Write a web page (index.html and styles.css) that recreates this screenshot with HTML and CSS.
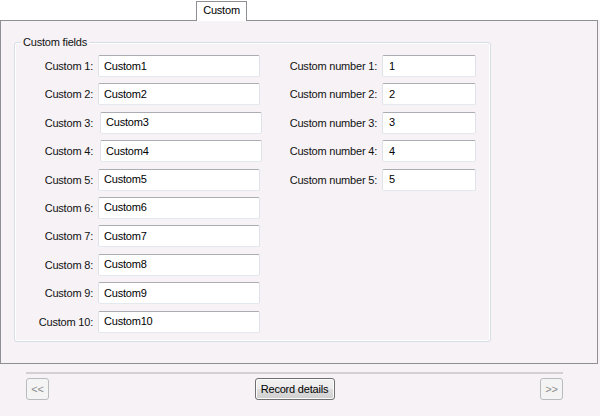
FILE: index.html
```html
<!DOCTYPE html>
<html>
<head>
<meta charset="utf-8">
<title>Custom</title>
<link rel="stylesheet" href="styles.css">
</head>
<body>
<div class="tabstrip"><div class="tab">Custom</div></div>
<div class="panel">
  <div class="group">
    <div class="legend">Custom fields</div>
    <div class="cols">
      <div class="grid left">
        <div class="lbl">Custom 1:</div><div class="field">Custom1</div>
        <div class="lbl">Custom 2:</div><div class="field">Custom2</div>
        <div class="lbl">Custom 3:</div><div class="field off">Custom3</div>
        <div class="lbl">Custom 4:</div><div class="field off">Custom4</div>
        <div class="lbl">Custom 5:</div><div class="field">Custom5</div>
        <div class="lbl">Custom 6:</div><div class="field">Custom6</div>
        <div class="lbl">Custom 7:</div><div class="field">Custom7</div>
        <div class="lbl">Custom 8:</div><div class="field">Custom8</div>
        <div class="lbl">Custom 9:</div><div class="field">Custom9</div>
        <div class="lbl">Custom 10:</div><div class="field">Custom10</div>
      </div>
      <div class="grid right">
        <div class="lbl">Custom number 1:</div><div class="field num">1</div>
        <div class="lbl">Custom number 2:</div><div class="field num">2</div>
        <div class="lbl">Custom number 3:</div><div class="field num">3</div>
        <div class="lbl">Custom number 4:</div><div class="field num">4</div>
        <div class="lbl">Custom number 5:</div><div class="field num">5</div>
      </div>
    </div>
  </div>
</div>
<div class="footer">
  <div class="sep"></div>
  <div class="buttons">
    <button class="btn nav" type="button">&lt;&lt;</button>
    <button class="btn primary" type="button">Record details</button>
    <button class="btn nav" type="button">&gt;&gt;</button>
  </div>
</div>
</body>
</html>
```
FILE: styles.css
```css
html, body {
  margin: 0;
  padding: 0;
}
body {
  width: 600px;
  height: 416px;
  overflow: hidden;
  background: #f6f2f6;
  font-family: "Liberation Sans", Arial, sans-serif;
  font-size: 11px;
  letter-spacing: -0.2px;
  color: #111;
}
.tabstrip {
  height: 20px;
  background: #fff;
  display: flex;
  align-items: flex-start;
  padding-left: 196px;
  position: relative;
  z-index: 1;
}
.tab {
  margin-top: 1px;
  width: 51px;
  height: 20px;
  box-sizing: border-box;
  border: 1px solid #8e9095;
  border-bottom: none;
  background: #fff;
  display: flex;
  align-items: center;
  justify-content: center;
  padding-bottom: 3px;
  color: #000;
}
.panel {
  width: 598px;
  height: 344px;
  box-sizing: border-box;
  border: 1px solid #8e9095;
  padding: 21px 0 0 13px;
  background: #f6f2f6;
}
.group {
  width: 477px;
  height: 300px;
  box-sizing: border-box;
  border: 1px solid #d5dfe5;
  border-radius: 3px;
  box-shadow: inset 0 0 0 1px #fff;
}
.legend {
  width: max-content;
  margin: -7px 0 0 6px;
  padding: 0 2px;
  line-height: 13px;
  background: #f6f2f6;
}
.cols {
  display: flex;
  margin-top: 6px;
}
.grid {
  display: grid;
  grid-auto-rows: 22px;
  row-gap: 6.4px;
  column-gap: 5px;
}
.left {
  grid-template-columns: 78px 162px;
}
.right {
  margin-left: 25px;
  grid-template-columns: 92px 94px;
}
.lbl {
  text-align: right;
  align-self: center;
  white-space: nowrap;
}
.field {
  box-sizing: border-box;
  height: 22px;
  border: 1px solid;
  border-color: #abadb3 #dfe2e8 #e3e9ef #dfe2e8;
  border-radius: 2px;
  background: #fff;
  display: flex;
  align-items: center;
  padding-left: 5px;
  padding-bottom: 1px;
  color: #000;
}
.field.off {
  margin-left: 2px;
  margin-right: -2px;
}
.field.num {
  padding-left: 6px;
}
.footer {
  margin: 8px 0 0 26px;
  width: 537px;
}
.sep {
  height: 2px;
  background: #d2d0d2;
}
.buttons {
  display: flex;
  justify-content: space-between;
  margin-top: 4px;
}
.btn {
  font: inherit;
  letter-spacing: inherit;
  height: 22px;
  padding: 0;
  margin: 0;
  border-radius: 3px;
  box-sizing: border-box;
}
.btn.nav {
  width: 23px;
  border: 1px solid #b9bcbf;
  background: #f4f4f4;
  color: #8c8c8c;
}
.btn.primary {
  width: 80px;
  border: 1px solid #707070;
  background: linear-gradient(#f2f2f2 0, #ebebeb 50%, #dddddd 51%, #cfcfcf 100%);
  box-shadow: inset 0 0 0 1px #fbfbfb;
  color: #000;
}
```
